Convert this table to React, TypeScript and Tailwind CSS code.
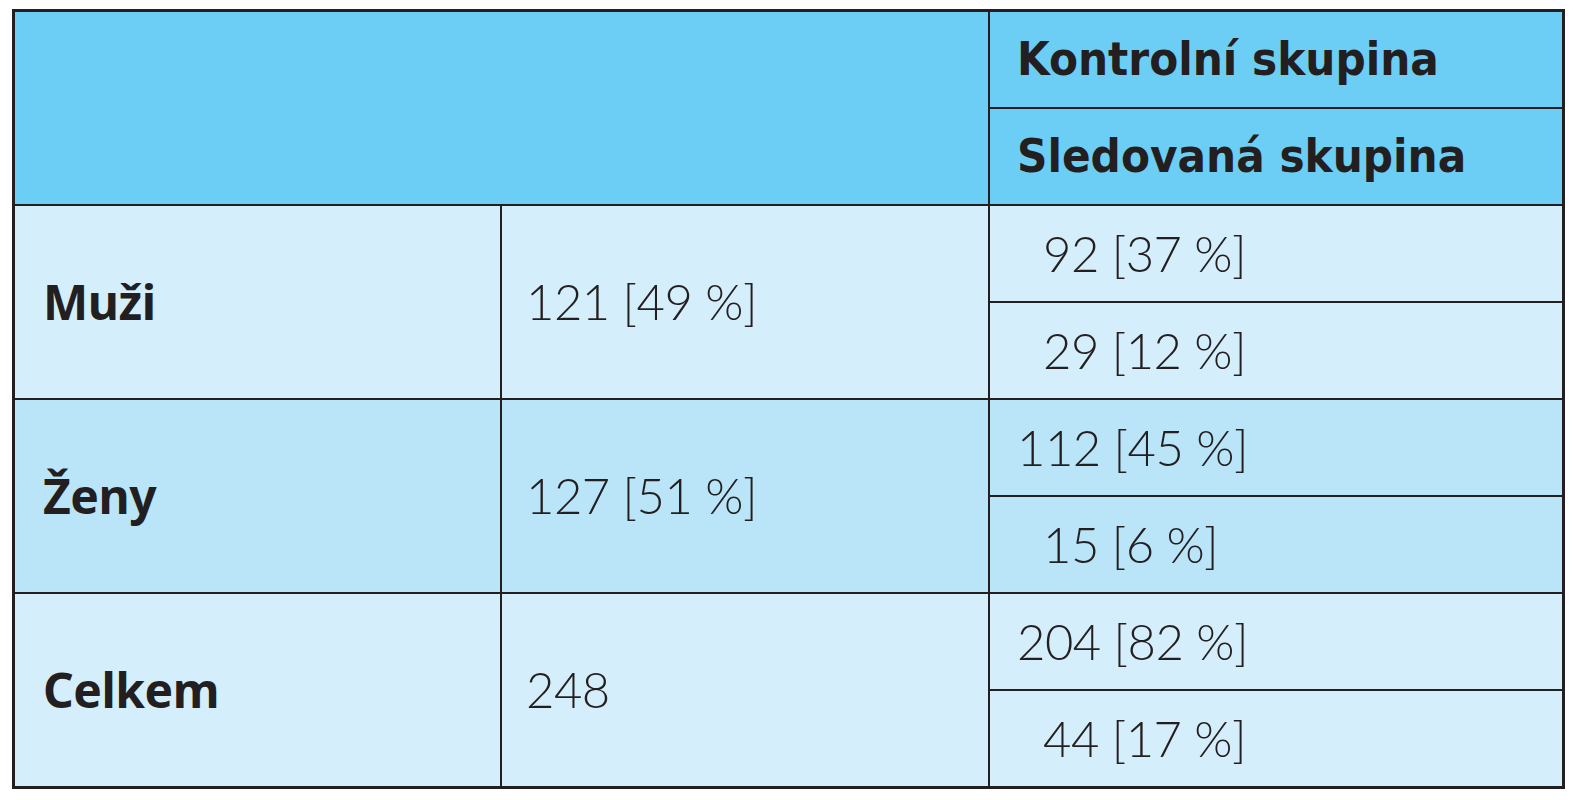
const rows = [
  { label: 'Muži', total: '121 [49 %]', bg: 'bg-[#d5eefb]', a: '92 [37 %]', aPad: true, b: '29 [12 %]', bPad: true },
  { label: 'Ženy', total: '127 [51 %]', bg: 'bg-[#bae5f9]', a: '112 [45 %]', aPad: false, b: '15 [6 %]', bPad: true },
  { label: 'Celkem', total: '248', bg: 'bg-[#d5eefb]', a: '204 [82 %]', aPad: false, b: '44 [17 %]', bPad: true },
]

const bold = "font-['Noto_Sans',sans-serif] font-bold text-[48px] tracking-[-0.5px] text-[#231f20]"
const light = "font-['Lato',sans-serif] font-light text-[49px] tracking-[-0.5px] text-[#231f20]"
const head = "font-['DejaVu_Sans_Condensed','DejaVu_Sans',sans-serif] font-bold text-[47px] text-[#231f20]"

export default function App() {
  return (
    <div className="w-[1575px] h-[800px] bg-white pt-[9px] pl-[12px]">
      <div className="grid w-[1553px] grid-cols-[485px_486px_572px] grid-rows-[repeat(8,95px)] gap-[2px] bg-[#231f20] p-[3px]">
        <div className="col-span-2 row-span-2 bg-[#6ccef5]" />
        <div className="flex items-center bg-[#6ccef5] pl-[27px]">
          <span className={head}>Kontrolní skupina</span>
        </div>
        <div className="flex items-center bg-[#6ccef5] pl-[27px]">
          <span className={head}>Sledovaná skupina</span>
        </div>
        {rows.map((r) => (
          <>
            <div key={r.label + 'l'} className={`row-span-2 flex items-center pl-[28px] ${r.bg}`}>
              <span className={bold}>{r.label}</span>
            </div>
            <div key={r.label + 't'} className={`row-span-2 flex items-center pl-[24px] ${r.bg}`}>
              <span className={light}>{r.total}</span>
            </div>
            <div key={r.label + 'a'} className={`flex items-center ${r.aPad ? 'pl-[53px]' : 'pl-[27px]'} ${r.bg}`}>
              <span className={light}>{r.a}</span>
            </div>
            <div key={r.label + 'b'} className={`flex items-center ${r.bPad ? 'pl-[53px]' : 'pl-[27px]'} ${r.bg}`}>
              <span className={light}>{r.b}</span>
            </div>
          </>
        ))}
      </div>
    </div>
  )
}
